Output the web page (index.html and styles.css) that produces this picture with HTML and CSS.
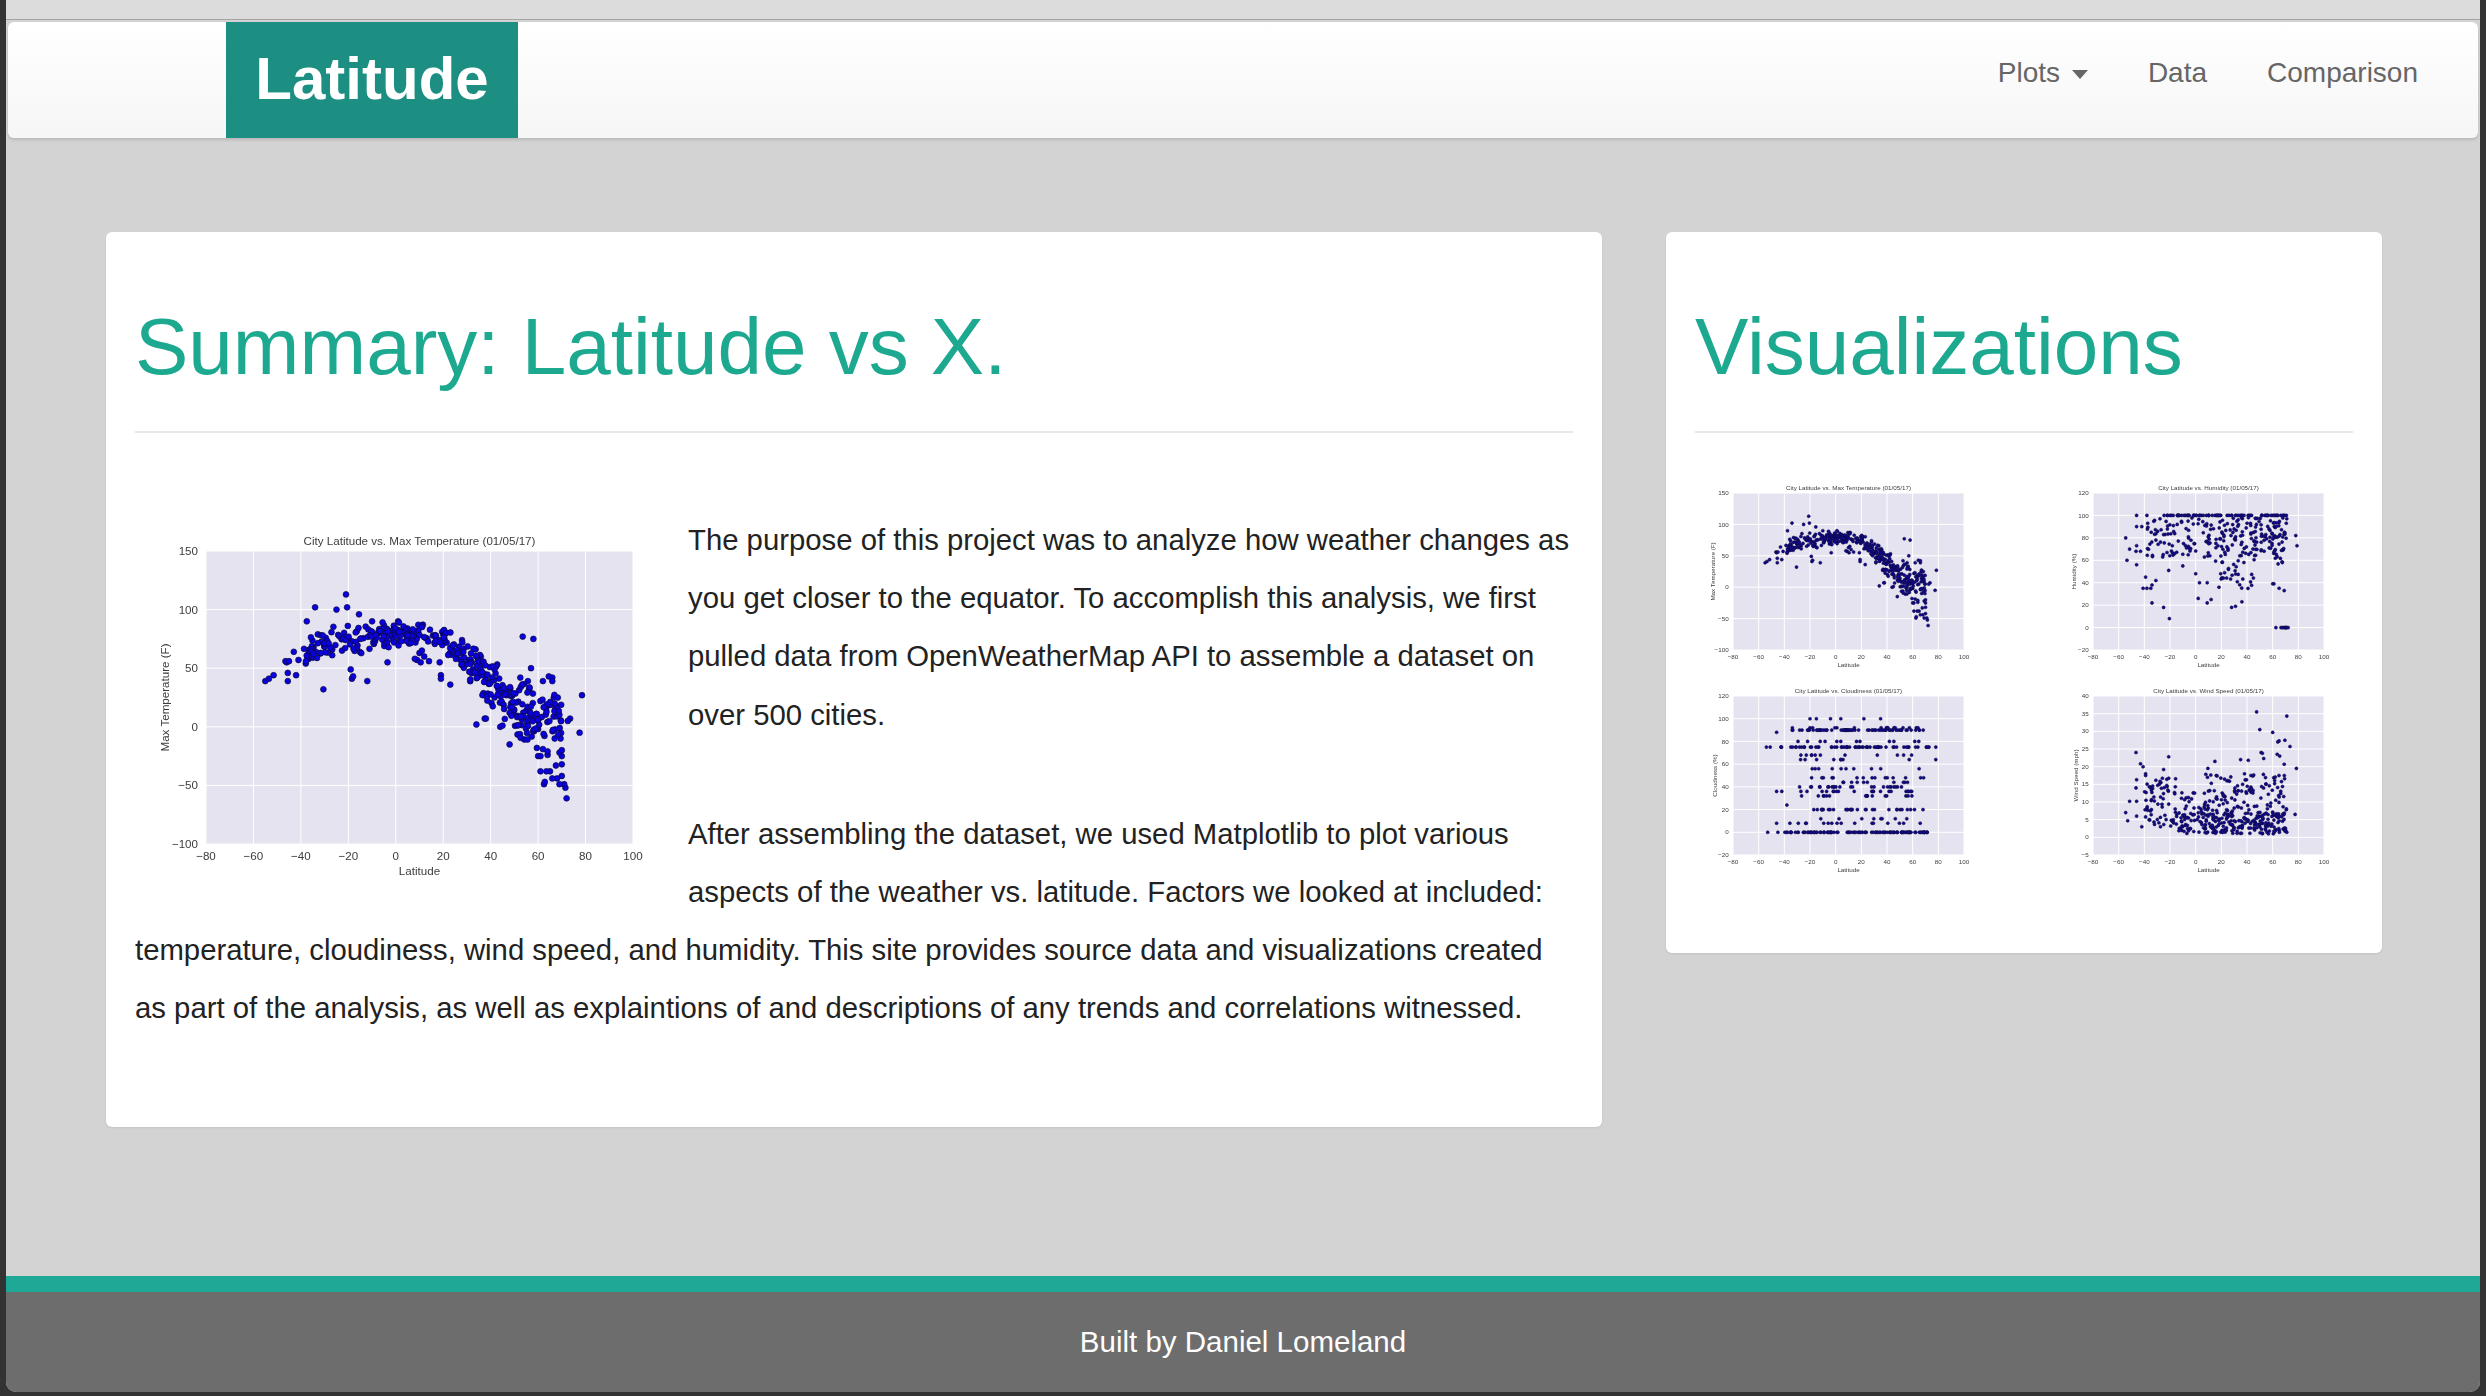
FILE: index.html
```html
<!DOCTYPE html>
<html lang="en">
<head>
  <meta charset="UTF-8" />
  <meta name="viewport" content="width=device-width, initial-scale=1.0" />
  <title>Latitude</title>
  <link rel="stylesheet" href="styles.css">
</head>
<body>
  <div class="topbar"></div>

  <div class="page">
    <nav class="navbar">
      <a class="logo" href="#">Latitude</a>
      <ul class="nav-links">
        <li><a href="#">Plots <span class="caret"></span></a></li>
        <li><a href="#">Data</a></li>
        <li><a href="#">Comparison</a></li>
      </ul>
    </nav>

    <main class="content">
      <section class="card card-summary">
        <h1>Summary: Latitude vs X.</h1>
        <hr />
        <div class="summary-text">
          <svg class="plot plot-large" id="plotMain" width="553" height="400"></svg>
          <p>The purpose of this project was to analyze how weather changes as you get closer to the equator. To accomplish this analysis, we first pulled data from OpenWeatherMap API to assemble a dataset on over 500 cities.</p>
          <p>After assembling the dataset, we used Matplotlib to plot various aspects of the weather vs. latitude. Factors we looked at included: temperature, cloudiness, wind speed, and humidity. This site provides source data and visualizations created as part of the analysis, as well as explaintions of and descriptions of any trends and correlations witnessed.</p>
        </div>
      </section>

      <section class="card card-visuals">
        <h1>Visualizations</h1>
        <hr />
        <div class="plot-grid">
          <svg class="plot" id="plotTemp" width="298" height="204"></svg>
          <svg class="plot" id="plotHumidity" width="298" height="204"></svg>
          <svg class="plot" id="plotCloud" width="298" height="204"></svg>
          <svg class="plot" id="plotWind" width="298" height="204"></svg>
        </div>
      </section>
    </main>

    <footer class="footer">Built by Daniel Lomeland</footer>
  </div>

  <script src="plots.js"></script>
</body>
</html>
```

FILE: styles.css
```css
html, body {
  height: 100%;
}
body {
  display: flex;
  flex-direction: column;
  box-sizing: border-box;
  height: 100vh;
  margin: 0;
  padding: 0 6px 4px;
  overflow: hidden;
  background-color: #333;
  font-family: "Liberation Sans", Arial, sans-serif;
}
.topbar {
  flex: none;
  height: 19px;
  background-color: #dcdcdc;
  border-bottom: 1px solid #a3a3a3;
}
.page {
  flex: 1;
  display: flex;
  flex-direction: column;
  min-height: 0;
  background-color: #d3d3d3;
  border-radius: 0 0 10px 10px;
  overflow: hidden;
}
.navbar {
  flex: none;
  display: flex;
  justify-content: space-between;
  height: 116px;
  margin: 2px 2px 0;
  background: linear-gradient(to bottom, #fff 0%, #f6f6f6 100%);
  border-radius: 6px;
  box-shadow: 0 2px 3px rgba(0,0,0,0.12);
}
.logo {
  display: flex;
  align-items: center;
  justify-content: center;
  box-sizing: border-box;
  width: 292px;
  margin-left: 218px;
  padding-bottom: 3px;
  background-color: #1c8f82;
  color: #fff;
  font-size: 60px;
  font-weight: bold;
  text-decoration: none;
}
.nav-links {
  display: flex;
  gap: 60px;
  margin: 31px 60px 0 0;
  padding: 0;
  list-style: none;
}
.nav-links a {
  color: #666;
  font-size: 28px;
  line-height: 40px;
  text-decoration: none;
}
.caret {
  display: inline-block;
  margin-left: 4px;
  vertical-align: middle;
  border-top: 9px solid #666;
  border-left: 8px solid transparent;
  border-right: 8px solid transparent;
}
.content {
  flex: 1;
  display: flex;
  align-items: flex-start;
  gap: 64px;
  min-height: 0;
  padding: 94px 98px 0 100px;
}
.card {
  box-sizing: border-box;
  padding: 0 29px;
  background-color: #fff;
  border-radius: 6px;
  box-shadow: 0 1px 2px rgba(0,0,0,0.08);
}
.card-summary {
  width: 1496px;
  height: 895px;
}
.card-visuals {
  width: 716px;
  height: 721px;
}
.card h1 {
  margin: 67px 0 36px;
  color: #1da98f;
  font-size: 80px;
  font-weight: normal;
  line-height: 96px;
}
.card hr {
  height: 2px;
  margin: 0;
  background-color: #e8e8e8;
  border: 0;
}
.summary-text {
  margin-top: 78px;
  color: #222;
  font-size: 29.3px;
  line-height: 58.2px;
}
.summary-text p {
  margin: 0 0 61px;
}
.plot {
  display: block;
  filter: blur(0.45px);
}
.plot-large {
  float: left;
}
.plot-grid {
  display: grid;
  grid-template-columns: 298px 298px;
  justify-content: space-between;
  margin-top: 43px;
}
.plot-grid .plot {
  filter: blur(0.6px);
}
.plot-bg {
  fill: #e5e3ef;
}
.plot-grid-line {
  stroke: #fff;
}
.plot-dot {
  fill: #0b00e0;
  stroke: #0a0a3c;
  stroke-width: 0.7;
}
.plot-grid .plot-dot {
  fill: #14088c;
  stroke-width: 0.5;
}
.plot-text {
  fill: #3c3c3c;
  font-family: "Liberation Sans", Arial, sans-serif;
}
.footer {
  flex: none;
  box-sizing: border-box;
  height: 116px;
  padding-top: 16px;
  background-color: #6d6d6d;
  border-top: 16px solid #1ea896;
  color: #fff;
  font-size: 29.5px;
  line-height: 68px;
  text-align: center;
}
```

FILE: plots.js
```js
const SVG_NS = 'http://www.w3.org/2000/svg';

// small seeded random so the dots land in the same place every load
let seed = 20170105;
function rand() {
  seed = (seed + 0x6D2B79F5) | 0;
  let t = Math.imul(seed ^ (seed >>> 15), 1 | seed);
  t = (t + Math.imul(t ^ (t >>> 7), 61 | t)) ^ t;
  return ((t ^ (t >>> 14)) >>> 0) / 4294967296;
}

function band(points, latMin, latMax, yMin, yMax, count) {
  for (let i = 0; i < count; i++) {
    points.push([
      latMin + rand() * (latMax - latMin),
      yMin + rand() * (yMax - yMin),
    ]);
  }
}

// a row of dots at one y value, used for the humidity and cloudiness rows
function row(points, latMin, latMax, value, count) {
  band(points, latMin, latMax, value, value, count);
}

// rough shape of the temperature cloud: [latitude, middle, half spread]
const tempCurve = [
  [-40, 62, 7], [-30, 71, 13], [-20, 76, 13], [-10, 78, 10], [0, 79, 9], [10, 79, 9],
  [20, 74, 10], [25, 68, 10], [30, 53, 15], [35, 46, 17], [40, 37, 20], [45, 28, 15], [50, 25, 14],
];

function tempAt(lat) {
  for (let i = 1; i < tempCurve.length; i++) {
    const [x0, m0, s0] = tempCurve[i - 1];
    const [x1, m1, s1] = tempCurve[i];
    if (lat <= x1) {
      const f = (lat - x0) / (x1 - x0);
      return [m0 + (m1 - m0) * f, s0 + (s1 - s0) * f];
    }
  }
  return [25, 14];
}

function curveDots(points, latMin, latMax, count) {
  for (let i = 0; i < count; i++) {
    const lat = latMin + rand() * (latMax - latMin);
    const [mid, spread] = tempAt(lat);
    const off = (rand() + rand() - 1) * spread * 1.3;
    points.push([lat, mid + off]);
  }
}

const tempPoints = [
  [-55, 39], [-53.5, 41], [-51.5, 44], [-46, 55], [-46.5, 56], [-45.5, 46], [-45.5, 39], [-45, 56],
  [-42, 44], [-43, 64], [-41, 57], [-37.5, 90], [-34, 102], [-30.5, 32], [-25, 100], [-21, 113],
  [-20.5, 102], [-15.5, 96], [-19, 49], [-18.5, 41], [-18, 43], [-12, 39], [-3.5, 55], [1, 90],
  [-10, 90], [9.5, 87], [18.5, 55], [19, 44], [19, 41], [23, 36], [34, 2], [37.5, 7], [38, 7],
  [53.5, 77], [58, 75], [57, 50], [52.5, 42], [64.5, 43], [66, 42], [66, 39], [62, 39], [78.5, 27],
  [77.5, -5], [73.5, 7], [72.5, 5], [48, -15], [44, 0], [45, 1], [72, -61], [71.5, -52], [71, -49],
  [70, -42], [69, -49], [68, -44], [66, -44], [65, -38], [63.5, -38], [61, -38], [62.5, -49],
  [62.8, -47], [67.5, -33], [70, -32], [70, -25], [69, -22], [70, -20], [64, -24], [64, -21],
  [60, -25], [61, -25], [59.5, -18], [62, -19], [69.5, -10], [67, -10], [9, 57], [10.5, 55],
  [10, 63], [11, 65], [12, 60], [14, 56], [8, 58],
];
curveDots(tempPoints, -39, -12, 75);
curveDots(tempPoints, -12, 20, 110);
curveDots(tempPoints, 20, 30, 40);
curveDots(tempPoints, 30, 45, 75);
curveDots(tempPoints, 45, 58, 38);
band(tempPoints, 44, 50, 6, 20, 8);
band(tempPoints, 50, 60, -12, 12, 34);
band(tempPoints, 59, 70, -8, 12, 22);
band(tempPoints, 60, 71, 12, 28, 18);

const humidityPoints = [
  [-54.5, 80], [-53.5, 60], [-51.5, 70], [-46.5, 68], [-46, 90], [-46, 73], [-46, 56], [-43, 68],
  [-42, 90], [-41, 35], [-39, 45], [-38, 35], [-35, 35], [-34, 38], [-34, 22], [-31, 42], [-25, 18],
  [-20.5, 8], [-21, 51], [-10, 55], [0, 48], [2, 26], [3, 40], [9, 22], [9, 40], [12, 25], [28, 18],
  [31, 19], [36, 23], [65, 35], [69, 33], [60, 39], [61, 39], [78, 82], [79, 73], [-46, 100], [-38, 100],
  [62.5, 0], [66.5, 0], [67.5, 0], [68.5, 0], [69.5, 0], [70, 0], [70.5, 0], [71, 0], [72, 0],
];
row(humidityPoints, -25, 73, 100, 75);
band(humidityPoints, -38, -20, 62, 98, 35);
band(humidityPoints, -20, 20, 62, 98, 65);
band(humidityPoints, 20, 48, 60, 98, 65);
band(humidityPoints, 45, 72, 68, 98, 70);
band(humidityPoints, 15, 45, 32, 62, 30);
band(humidityPoints, 58, 70, 56, 70, 10);

const cloudPoints = [
  [-20, 100], [-15, 100], [-4, 100], [4, 100], [22, 100], [35, 100], [-46, 88], [-54, 75], [-51, 75],
  [78, 75], [-38, 24], [78, 64], [-46, 36], [-42, 36], [-46, 8], [-45, 0], [-53, 0],
];
row(cloudPoints, -40, 72, 0, 110);
row(cloudPoints, -36, 72, 8, 16);
row(cloudPoints, -31, 66, 12, 8);
row(cloudPoints, -25, 70, 20, 30);
row(cloudPoints, -30, 63, 32, 16);
row(cloudPoints, -30, 65, 36, 20);
row(cloudPoints, -29, 65, 40, 24);
row(cloudPoints, -8, 68, 44, 10);
row(cloudPoints, -27, 72, 48, 15);
row(cloudPoints, -25, 68, 56, 10);
row(cloudPoints, -35, 63, 64, 8);
row(cloudPoints, -35, 63, 68, 11);
row(cloudPoints, -43, 74, 75, 60);
row(cloudPoints, -35, 70, 80, 12);
row(cloudPoints, -35, 71, 90, 65);
row(cloudPoints, -35, 66, 92, 16);

const windPoints = [
  [47.5, 35.5], [71, 34.3], [50, 30.5], [60, 29.7], [69.5, 27.5], [64, 27], [65, 27.3], [73.5, 25.7],
  [51, 24], [52, 23.8], [63.5, 23.5], [65.5, 23], [53, 22.3], [35, 22], [41, 21.8], [15, 21.5],
  [69, 20.7], [-46.5, 24], [-21, 22.8], [-43, 20.8], [-41, 20], [-25, 19.2], [9.5, 19.5], [78.5, 19.5],
  [77.5, 6.5], [-54.5, 7], [-53, 4.7], [-51.5, 10.2], [-46, 16.3], [-46.5, 14], [-46, 10.2], [-46, 6],
  [-42, 3], [-39, 18], [-39, 17.5],
];
band(windPoints, -15, 72, 1, 7, 240);
band(windPoints, -40, -15, 3, 17, 65);
band(windPoints, -12, 5, 7, 13, 15);
band(windPoints, 5, 72, 7, 18, 115);

function el(parent, name, attrs, text) {
  const node = document.createElementNS(SVG_NS, name);
  for (const key in attrs) node.setAttribute(key, attrs[key]);
  if (text !== undefined) node.textContent = text;
  parent.appendChild(node);
  return node;
}

function drawPlot(id, opts) {
  const svg = document.getElementById(id);
  const s = opts.scale;
  const [left, top, right, bottom] = opts.box;
  const sx = (v) => left + ((v + 80) / 180) * (right - left);
  const sy = (v) => bottom - ((v - opts.yMin) / (opts.yMax - opts.yMin)) * (bottom - top);
  const font = 11.6 * s;

  el(svg, 'rect', { class: 'plot-bg', x: left, y: top, width: right - left, height: bottom - top });

  for (let x = -80; x <= 100; x += 20) {
    el(svg, 'line', { class: 'plot-grid-line', x1: sx(x), x2: sx(x), y1: top, y2: bottom });
    el(svg, 'text', { class: 'plot-text', x: sx(x), y: bottom + 16 * s, 'font-size': font, 'text-anchor': 'middle' },
      String(x).replace('-', '\u2212'));
  }
  for (let y = opts.yMin; y <= opts.yMax; y += opts.yStep) {
    el(svg, 'line', { class: 'plot-grid-line', x1: left, x2: right, y1: sy(y), y2: sy(y) });
    el(svg, 'text', { class: 'plot-text', x: left - 8 * s, y: sy(y) + 4 * s, 'font-size': font, 'text-anchor': 'end' },
      String(y).replace('-', '\u2212'));
  }

  const mid = (left + right) / 2;
  el(svg, 'text', { class: 'plot-text', x: mid, y: top - 6 * s, 'font-size': font, 'text-anchor': 'middle' }, opts.title);
  el(svg, 'text', { class: 'plot-text', x: mid, y: bottom + 31 * s, 'font-size': font, 'text-anchor': 'middle' }, 'Latitude');
  const labelX = left - opts.labelGap * s;
  el(svg, 'text', {
    class: 'plot-text',
    x: labelX,
    y: (top + bottom) / 2,
    'font-size': font,
    'text-anchor': 'middle',
    transform: `rotate(-90 ${labelX} ${(top + bottom) / 2})`,
  }, opts.yLabel);

  opts.points.forEach(([lat, val]) => {
    el(svg, 'circle', { class: 'plot-dot', cx: sx(lat).toFixed(1), cy: sy(val).toFixed(1), r: s === 1 ? 2.9 : 1.55 });
  });
}

const tempOpts = {
  title: 'City Latitude vs. Max Temperature (01/05/17)',
  yLabel: 'Max Temperature (F)',
  yMin: -100, yMax: 150, yStep: 50,
  points: tempPoints,
};

drawPlot('plotMain', { ...tempOpts, scale: 1, labelGap: 37, box: [71, 40, 498, 333] });
drawPlot('plotTemp', { ...tempOpts, scale: 0.54, labelGap: 34, box: [38, 17, 269, 174] });
drawPlot('plotHumidity', {
  title: 'City Latitude vs. Humidity (01/05/17)',
  yLabel: 'Humidity (%)',
  yMin: -20, yMax: 120, yStep: 20,
  labelGap: 32,
  points: humidityPoints,
  scale: 0.54,
  box: [38, 17, 269, 174],
});
drawPlot('plotCloud', {
  title: 'City Latitude vs. Cloudiness (01/05/17)',
  yLabel: 'Cloudiness (%)',
  yMin: -20, yMax: 120, yStep: 20,
  labelGap: 30,
  points: cloudPoints,
  scale: 0.54,
  box: [38, 16, 269, 175],
});
drawPlot('plotWind', {
  title: 'City Latitude vs. Wind Speed (01/05/17)',
  yLabel: 'Wind Speed (mph)',
  yMin: -5, yMax: 40, yStep: 5,
  labelGap: 27,
  points: windPoints,
  scale: 0.54,
  box: [38, 16, 269, 175],
});
```
